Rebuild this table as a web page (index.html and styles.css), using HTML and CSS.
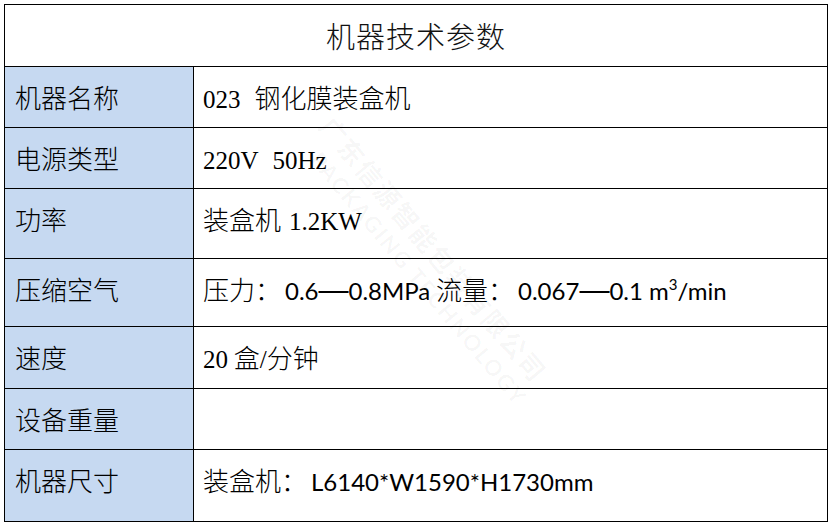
FILE: index.html
```html
<!DOCTYPE html>
<html lang="zh-CN">
<head>
<meta charset="utf-8">
<title>机器技术参数</title>
<link rel="stylesheet" href="styles.css">
</head>
<body>
<div class="sheet">
  <table class="spec">
    <colgroup>
      <col class="col-label">
      <col class="col-value">
    </colgroup>
    <tr class="r-title"><th colspan="2" class="title">机器技术参数</th></tr>
    <tr class="r1"><td class="label">机器名称</td><td class="value serif"><span class="ser">023</span><span class="gap"></span>钢化膜装盒机</td></tr>
    <tr class="r2"><td class="label">电源类型</td><td class="value serif"><span class="ser">220V</span><span class="gap"></span><span class="ser">50Hz</span></td></tr>
    <tr class="r3"><td class="label">功率</td><td class="value serif">装盒机<span class="ser sp">1.2KW</span></td></tr>
    <tr class="r4"><td class="label">压缩空气</td><td class="value">压力：<span class="lat l1">0.6</span><span class="dash">—</span><span class="lat">0.8MPa</span> 流量：<span class="lat l1">0.067</span><span class="dash">—</span><span class="lat">0.1 m<sup>3</sup>/min</span></td></tr>
    <tr class="r5"><td class="label">速度</td><td class="value serif"><span class="ser">20</span> 盒<span class="ser">/</span>分钟</td></tr>
    <tr class="r6"><td class="label">设备重量</td><td class="value"></td></tr>
    <tr class="r7"><td class="label">机器尺寸</td><td class="value">装盒机：<span class="lat l1">L6140*W1590*H1730mm</span></td></tr>
  </table>
  <div class="watermark" aria-hidden="true">
    <div class="wm-cn">广东信源智能包装有限公司</div>
    <div class="wm-en">PACKAGING TECHNOLOGY</div>
  </div>
</div>
</body>
</html>
```

FILE: styles.css
```css
html, body {
  margin: 0;
  padding: 0;
  background: #ffffff;
}
body {
  padding: 4px 0 0 4px;
  font-family: "Noto Sans CJK SC", sans-serif;
  color: #000;
}
.sheet {
  position: relative;
  width: 823px;
}
.spec {
  border-collapse: collapse;
  table-layout: fixed;
  width: 823px;
}
.col-label { width: 189px; }
.col-value { width: 634px; }
.spec th, .spec td {
  border: 1px solid #000;
  padding: 0;
  vertical-align: top;
  white-space: nowrap;
  line-height: 30px;
}
.r-title { height: 62px; }
.r1 { height: 61px; }
.r2 { height: 61px; }
.r3 { height: 70px; }
.r4 { height: 68px; }
.r5 { height: 62px; }
.r6 { height: 61px; }
.r7 { height: 72px; }
.title {
  font-family: "Noto Sans CJK SC", sans-serif;
  font-weight: 300;
  font-size: 29px;
  letter-spacing: 1px;
  text-align: center;
  color: #111;
  padding-top: 15px !important;
}
.label {
  background: #c6d9f1;
  font-size: 26px;
  font-weight: 300;
  padding: 15px 0 0 10px !important;
  text-align: left;
}
.value {
  font-size: 26px;
  font-weight: 300;
  padding: 15px 0 0 9px !important;
  text-align: left;
  font-family: "Noto Sans CJK SC", sans-serif;
}
.ser {
  font-family: "Liberation Serif", serif;
  font-size: 25px;
  font-weight: 400;
}
.ser.sp { margin-left: 8px; }
.gap {
  display: inline-block;
  width: 14px;
}
.lat {
  font-family: "Lato", sans-serif;
  font-size: 24px;
  font-weight: 400;
}
.lat.l1 { margin-left: 4px; }
.dash {
  font-family: "Liberation Sans", sans-serif;
  font-size: 30px;
  font-weight: 400;
}
.lat sup {
  font-size: 15px;
  vertical-align: 0;
  position: relative;
  top: -10px;
  line-height: 0;
}
.watermark {
  position: absolute;
  left: 250px;
  top: 225px;
  transform: rotate(50deg);
  transform-origin: center;
  pointer-events: none;
  color: rgba(0, 0, 0, 0.04);
  white-space: nowrap;
  line-height: 1.3;
}
.wm-cn {
  font-size: 26px;
  font-weight: 700;
  letter-spacing: 2px;
}
.wm-en {
  font-family: "Lato", sans-serif;
  font-size: 22px;
  font-weight: 700;
  letter-spacing: 2px;
  margin-left: 20px;
}
```
